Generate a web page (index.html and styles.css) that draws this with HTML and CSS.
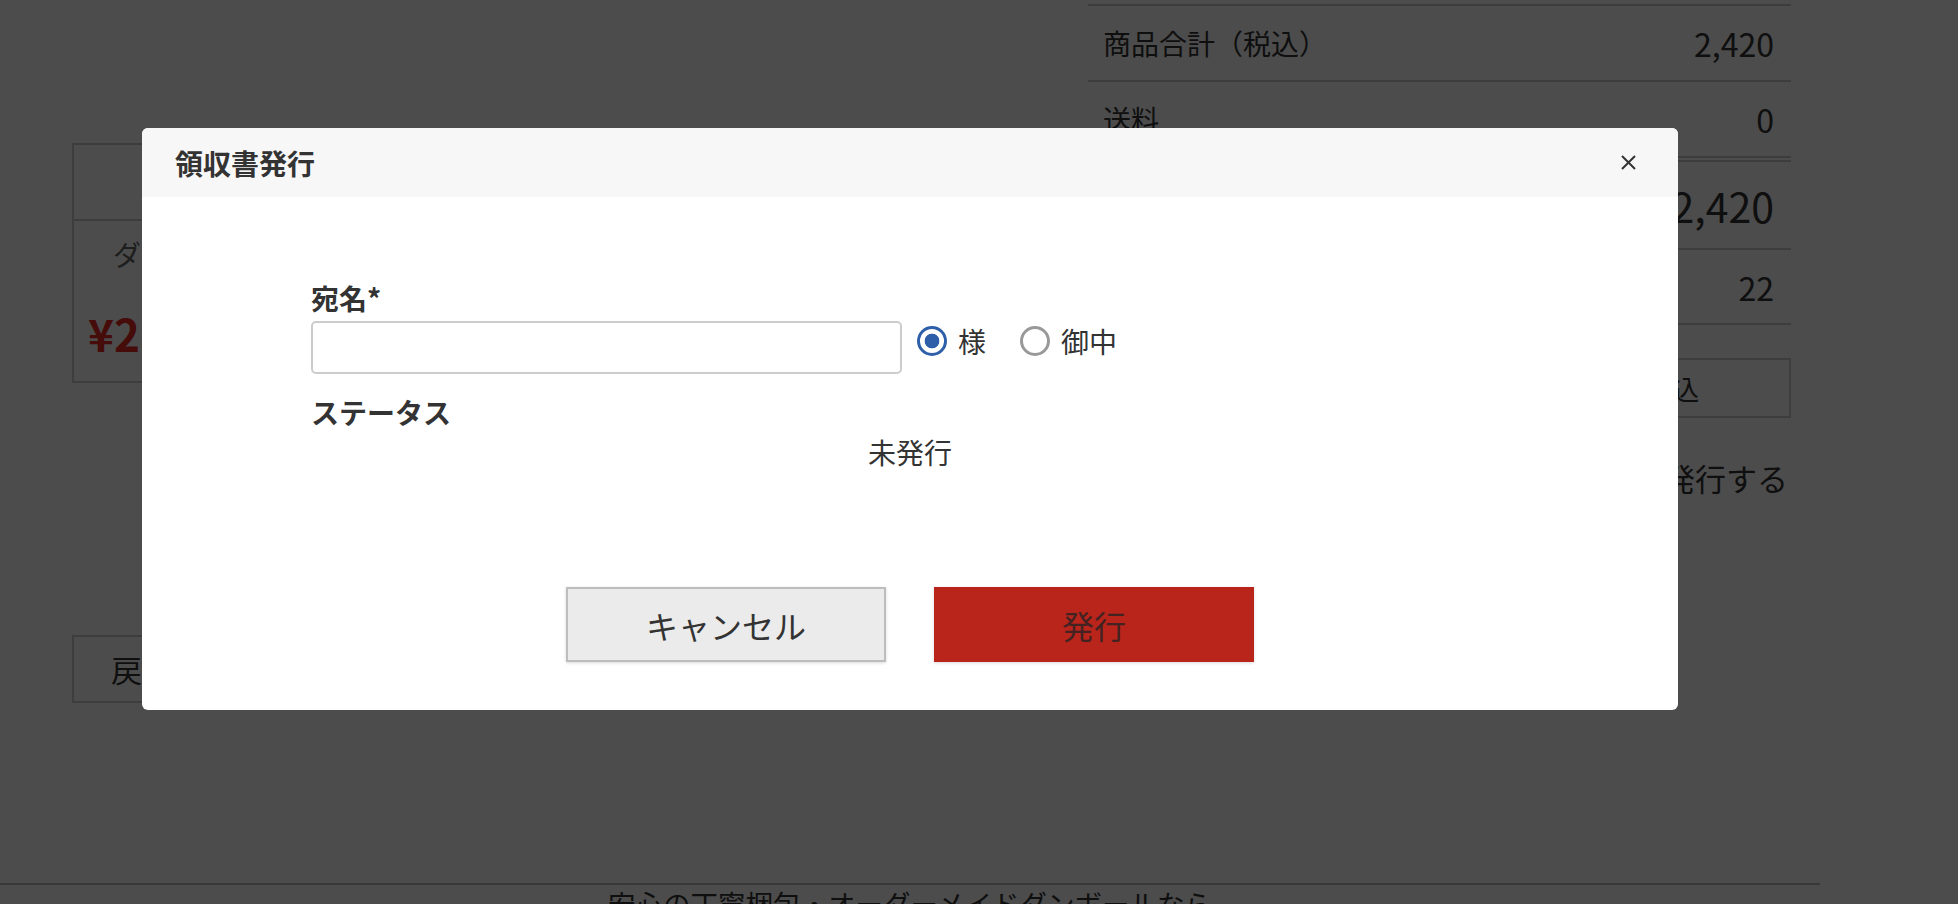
FILE: index.html
```html
<!DOCTYPE html>
<html lang="ja">
<head>
    <meta charset="UTF-8">
    <title>領収書発行</title>
    <link rel="stylesheet" href="styles.css">
</head>
<body>

<div class="page">
    <div class="cols">
        <div class="main">
            <div class="cart">
                <div class="cartHead">商品</div>
                <div class="cartItem">
                    <p class="itemName">ダンボール箱 A4サイズ 10枚セット</p>
                    <p class="itemPrice">¥2,200</p>
                </div>
            </div>
            <a class="back" href="#">戻る</a>
        </div>
        <div class="summary">
            <dl class="sumRow">
                <dt>商品合計（税込）</dt>
                <dd>2,420</dd>
            </dl>
            <dl class="sumRow sumShip">
                <dt>送料</dt>
                <dd>0</dd>
            </dl>
            <dl class="sumRow sumTotal">
                <dt>お支払い合計</dt>
                <dd>2,420</dd>
            </dl>
            <dl class="sumRow sumPoint">
                <dt>獲得ポイント</dt>
                <dd>22</dd>
            </dl>
            <div class="taxBox">領収書の記載金額はすべて消費税・送料込</div>
            <a class="issueLink" href="#">領収書を発行する</a>
        </div>
    </div>
    <div class="footer">
        <p>安心の丁寧梱包・オーダーメイドダンボールなら</p>
    </div>
</div>

<div class="mask"></div>
<div class="dialog">
    <div class="dialogHead">
        <h2 class="dialogTitle">領収書発行</h2>
        <span class="close">
            <svg width="15" height="15" viewBox="0 0 15 15"><path d="M1 1 L14 14 M14 1 L1 14" stroke="#333" stroke-width="2" fill="none"/></svg>
        </span>
    </div>
    <div class="dialogBody">
        <div class="form">
            <p class="fieldLabel">宛名*</p>
            <div class="nameRow">
                <input class="nameInput" type="text"/>
                <label class="radio"><input type="radio" name="suffix" checked/>様</label>
                <label class="radio"><input type="radio" name="suffix"/>御中</label>
            </div>
            <p class="fieldLabel statusLabel">ステータス</p>
            <p class="statusValue">未発行</p>
        </div>
        <div class="btns">
            <button class="btn btnCancel" type="button">キャンセル</button>
            <button class="btn btnIssue" type="button">発行</button>
        </div>
    </div>
</div>

</body>
</html>
```

FILE: styles.css
```css
body,h1,h2,h3,p,dl,dt,dd,ul,li{ margin: 0; padding: 0;}
a{ text-decoration: none; color: inherit;}
/* reset */

body{
    background: #fff;
    color: #333;
    font-family: "Noto Sans CJK JP", "Noto Sans", sans-serif;
    font-size: 28px;
    line-height: 34px;
    margin: 0;
}

/* page under the dialog */
.page{
    padding-top: 4px;
}
.page .cols{
    display: grid;
    grid-template-columns: 968px 703px;
    column-gap: 48px;
    padding-left: 72px;
    min-height: 879px;
    box-sizing: border-box;
}
.page .main{
    padding-top: 139px;
}
.page .cart{
    border: 2px solid #ccc;
}
.page .cartHead{
    height: 74px;
    line-height: 74px;
    text-align: center;
    border-bottom: 2px solid #ccc;
}
.page .cartItem{
    height: 160px;
    box-sizing: border-box;
    padding-top: 16px;
}
.page .itemName{
    color: #666;
    padding-left: 39px;
}
.page .itemPrice{
    color: #e8291f;
    font-size: 44px;
    line-height: 48px;
    font-weight: bold;
    padding-left: 14px;
    margin-top: 38px;
}
.page .back{
    display: block;
    width: 140px;
    height: 68px;
    box-sizing: border-box;
    margin-top: 252px;
    border: 2px solid #ccc;
    font-size: 31px;
    line-height: 64px;
    text-align: center;
}

.page .summary{
    border-top: 2px solid #ccc;
}
.page .sumRow{
    display: flex;
    justify-content: space-between;
    align-items: center;
    height: 74px;
    padding: 0 17px 0 15px;
    border-bottom: 2px solid #ccc;
}
.page .sumRow dd{
    font-size: 32px;
}
.page .sumShip{
    border-bottom: 6px double #ccc;
}
.page .sumTotal{
    height: 86px;
}
.page .sumTotal dd{
    font-size: 41px;
}
.page .sumPoint{
    height: 73px;
}
.page .taxBox{
    margin-top: 33px;
    height: 60px;
    box-sizing: border-box;
    border: 2px solid #ccc;
    font-size: 27.5px;
    line-height: 56px;
    text-align: center;
    white-space: nowrap;
}
.page .issueLink{
    display: block;
    margin-top: 40px;
    padding-right: 3px;
    font-size: 31px;
    line-height: 40px;
    text-align: right;
}
.page .footer{
    border-top: 2px solid #bbb;
    padding-top: 1px;
    width: 1820px;
    text-align: center;
    font-size: 27.5px;
}

/* dialog */
.mask{
    position: fixed;
    left: 0;
    top: 0;
    right: 0;
    bottom: 0;
    background: rgba(0,0,0,.7);
}
.dialog{
    position: fixed;
    left: 142px;
    top: 128px;
    width: 1536px;
    background: #fff;
    border-radius: 6px;
    overflow: hidden;
}
.dialog .dialogHead{
    height: 69px;
    background: #f7f7f7;
    display: flex;
    align-items: center;
    justify-content: space-between;
    padding: 0 42px 0 33px;
}
.dialog .dialogTitle{
    font-size: 28px;
    font-weight: bold;
    line-height: 34px;
}
.dialog .close{
    display: flex;
    cursor: pointer;
}
.dialog .dialogBody{
    padding: 84px 0 48px;
}
.dialog .form{
    width: 1198px;
    margin: 0 auto;
}
.dialog .fieldLabel{
    font-weight: bold;
    margin-bottom: 6px;
}
.dialog .nameRow{
    display: flex;
    align-items: flex-start;
}
.dialog .nameInput{
    width: 591px;
    height: 53px;
    box-sizing: border-box;
    border: 2px solid #ccc;
    border-radius: 5px;
    margin: 0 15px 0 0;
    font-size: 26px;
}
.dialog .radio{
    display: flex;
    align-items: center;
    margin: 3px 34px 0 0;
    color: #333;
}
.dialog .radio input{
    -webkit-appearance: none;
    appearance: none;
    width: 30px;
    height: 30px;
    box-sizing: border-box;
    border: 3.5px solid #999;
    border-radius: 50%;
    margin: 0 11px 0 0;
    background: #fff;
}
.dialog .radio input:checked{
    border-color: #2f5fa8;
    background: radial-gradient(circle, #2f5fa8 0 7px, #fff 7.7px);
}
.dialog .statusLabel{
    margin-top: 21px;
}
.dialog .statusValue{
    text-align: center;
}
.dialog .btns{
    display: flex;
    justify-content: center;
    gap: 48px;
    margin-top: 118px;
}
.dialog .btn{
    width: 320px;
    height: 75px;
    box-sizing: border-box;
    font-family: inherit;
    font-size: 32px;
    cursor: pointer;
    box-shadow: 0 1px 3px rgba(0,0,0,.15);
}
.dialog .btnCancel{
    background: #ebebeb;
    border: 2px solid #bdbdbd;
    color: #333;
}
.dialog .btnIssue{
    background: #b9251b;
    border: 0;
    color: #442222;
}
```
